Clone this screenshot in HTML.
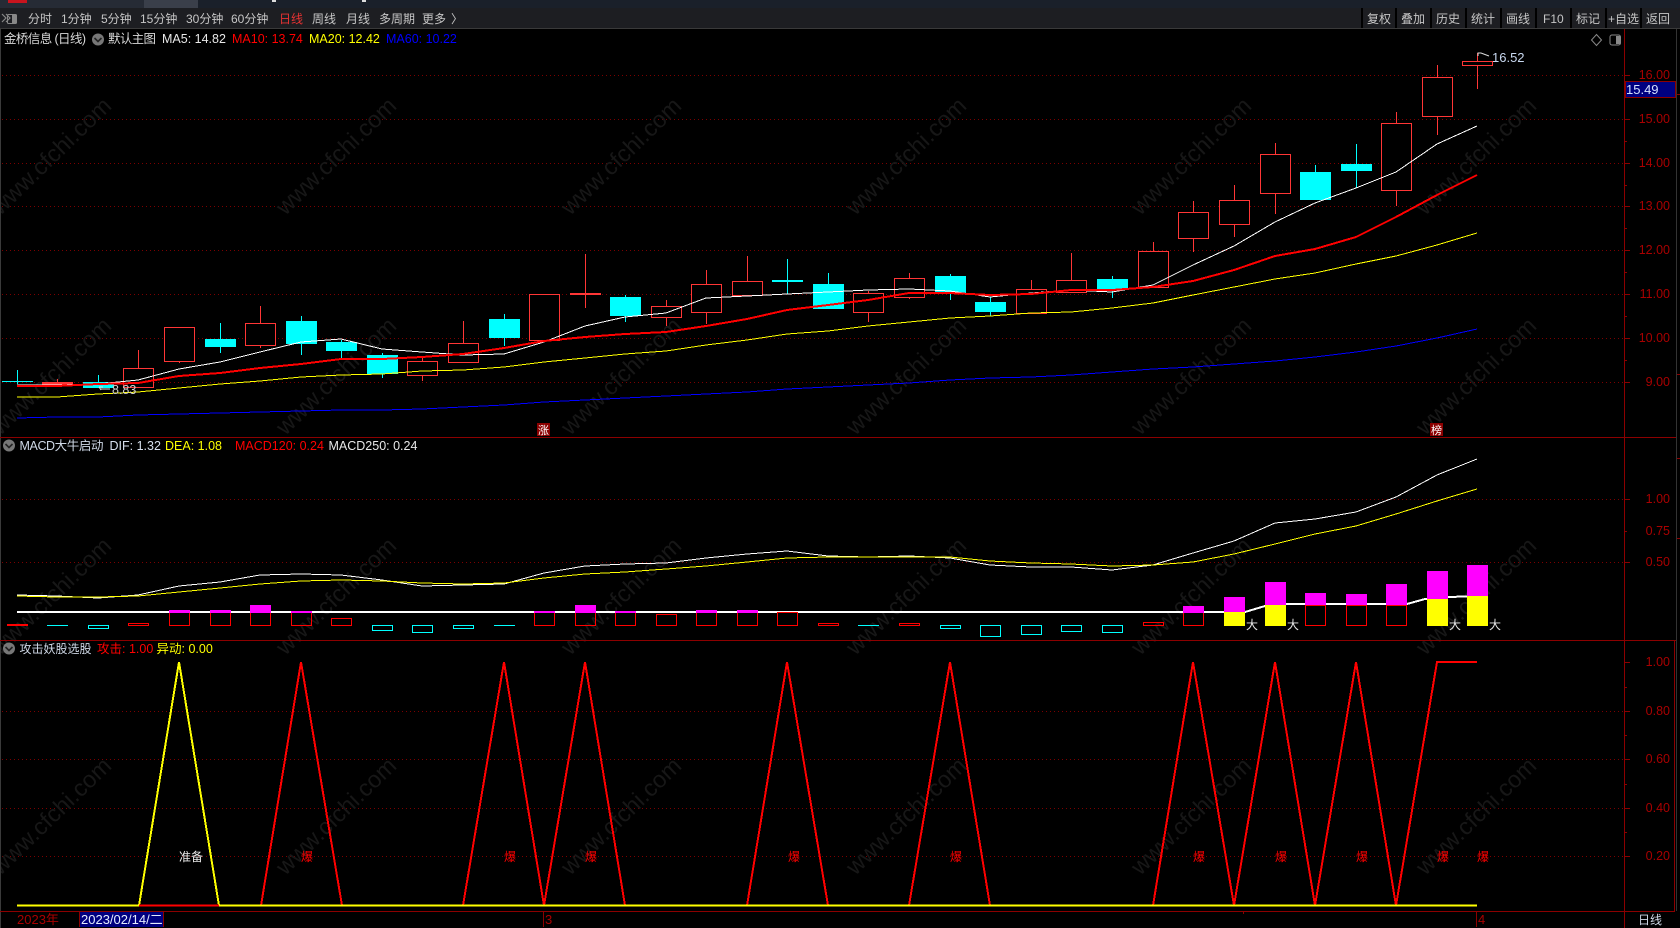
<!DOCTYPE html>
<html lang="zh"><head><meta charset="utf-8"><title>金桥信息</title>
<style>
html,body{margin:0;padding:0;background:#000;width:1680px;height:928px;overflow:hidden}
svg{position:absolute;left:0;top:0;display:block}
text{font-family:"Liberation Sans","Noto Sans CJK SC",sans-serif;font-size:12.5px;white-space:pre}
.w text{font-size:23.5px;fill:#171717;letter-spacing:.1px}
.t text{font-size:12px;fill:#c6c6c6}
.a text{fill:#a80000;text-anchor:end;font-size:12.5px}
.h{fill:#000;stroke:#ff3636;stroke-width:1}
.c{fill:#0ff}
.m{fill:#f0f}
.y{fill:#ff0}
.r{fill:none;stroke:#f00;stroke-width:1}
.q{fill:none;stroke:#0ff;stroke-width:1}
</style></head><body>
<svg width="1680" height="928" viewBox="0 0 1680 928" xmlns="http://www.w3.org/2000/svg">
<rect width="1680" height="928" fill="#000"/>
<!-- top strip -->
<rect width="1680" height="8" fill="#1a202a"/>
<rect x="0" y="0" width="144" height="8" fill="#262b35"/>
<rect x="144" y="0" width="54" height="8" fill="#3a3f4a"/>
<rect x="8" y="0" width="19" height="3" fill="#c8141e"/>
<rect x="272" y="0" width="4" height="2" fill="#ddd"/><rect x="362" y="0" width="4" height="2" fill="#ddd"/>
<!-- toolbar -->
<rect y="8" width="1680" height="20" fill="#1d1e22"/>
<rect y="28" width="1680" height="1" fill="#3a3a3a"/>
<path d="M2 14l4 4-4 4M6 14l4 4-4 4" fill="none" stroke="#888" stroke-width="1.2"/>
<rect x="7.5" y="14.5" width="9" height="9" rx="1" fill="none" stroke="#888"/><rect x="12" y="15" width="4" height="8" fill="#888"/>
<g fill="#000"><rect x="1361" y="8" width="2" height="20"/><rect x="1395" y="8" width="2" height="20"/><rect x="1430" y="8" width="2" height="20"/><rect x="1465" y="8" width="2" height="20"/><rect x="1500" y="8" width="2" height="20"/><rect x="1535" y="8" width="2" height="20"/><rect x="1570" y="8" width="2" height="20"/><rect x="1605" y="8" width="2" height="20"/><rect x="1640" y="8" width="2" height="20"/></g>
<g class="t">
<text x="28" y="23">分时</text><text x="61" y="23">1分钟</text><text x="101" y="23">5分钟</text><text x="140" y="23">15分钟</text><text x="186" y="23">30分钟</text><text x="231" y="23">60分钟</text>
<text x="279" y="23" style="fill:#e63232">日线</text><text x="312" y="23">周线</text><text x="346" y="23">月线</text><text x="379" y="23">多周期</text><text x="422" y="23">更多</text><text x="451" y="23">〉</text>
<text x="1367" y="23">复权</text><text x="1401" y="23">叠加</text><text x="1436" y="23">历史</text><text x="1471" y="23">统计</text><text x="1506" y="23">画线</text><text x="1543" y="23">F10</text><text x="1576" y="23">标记</text><text x="1608" y="23">+自选</text><text x="1646" y="23">返回</text>
</g>
<!-- grid -->
<path d="M2 75.5H1624M2 119.5H1624M2 163.5H1624M2 206.5H1624M2 250.5H1624M2 294.5H1624M2 338.5H1624M2 382.5H1624M2 499.5H1624M2 562.5H1624M2 711.5H1624M2 759.5H1624M2 808.5H1624M2 856.5H1624" stroke="#7c0000" stroke-width="1" stroke-dasharray="1 3" fill="none" shape-rendering="crispEdges"/>
<!-- watermark -->
<g class="w">
<text transform="translate(51 156) rotate(-44)" text-anchor="middle" y="8">www.cfchi.com</text><text transform="translate(336 156) rotate(-44)" text-anchor="middle" y="8">www.cfchi.com</text><text transform="translate(621 156) rotate(-44)" text-anchor="middle" y="8">www.cfchi.com</text><text transform="translate(906 156) rotate(-44)" text-anchor="middle" y="8">www.cfchi.com</text><text transform="translate(1191 156) rotate(-44)" text-anchor="middle" y="8">www.cfchi.com</text><text transform="translate(1476 156) rotate(-44)" text-anchor="middle" y="8">www.cfchi.com</text>
<text transform="translate(51 376) rotate(-44)" text-anchor="middle" y="8">www.cfchi.com</text><text transform="translate(336 376) rotate(-44)" text-anchor="middle" y="8">www.cfchi.com</text><text transform="translate(621 376) rotate(-44)" text-anchor="middle" y="8">www.cfchi.com</text><text transform="translate(906 376) rotate(-44)" text-anchor="middle" y="8">www.cfchi.com</text><text transform="translate(1191 376) rotate(-44)" text-anchor="middle" y="8">www.cfchi.com</text><text transform="translate(1476 376) rotate(-44)" text-anchor="middle" y="8">www.cfchi.com</text>
<text transform="translate(51 596) rotate(-44)" text-anchor="middle" y="8">www.cfchi.com</text><text transform="translate(336 596) rotate(-44)" text-anchor="middle" y="8">www.cfchi.com</text><text transform="translate(621 596) rotate(-44)" text-anchor="middle" y="8">www.cfchi.com</text><text transform="translate(906 596) rotate(-44)" text-anchor="middle" y="8">www.cfchi.com</text><text transform="translate(1191 596) rotate(-44)" text-anchor="middle" y="8">www.cfchi.com</text><text transform="translate(1476 596) rotate(-44)" text-anchor="middle" y="8">www.cfchi.com</text>
<text transform="translate(51 816) rotate(-44)" text-anchor="middle" y="8">www.cfchi.com</text><text transform="translate(336 816) rotate(-44)" text-anchor="middle" y="8">www.cfchi.com</text><text transform="translate(621 816) rotate(-44)" text-anchor="middle" y="8">www.cfchi.com</text><text transform="translate(906 816) rotate(-44)" text-anchor="middle" y="8">www.cfchi.com</text><text transform="translate(1191 816) rotate(-44)" text-anchor="middle" y="8">www.cfchi.com</text><text transform="translate(1476 816) rotate(-44)" text-anchor="middle" y="8">www.cfchi.com</text>
</g>
<g shape-rendering="crispEdges">
<!-- red wicks -->
<path fill="none" stroke="#ff3636" d="M57.5 379V382M138.5 350V368M179.5 361V363M260.5 306V323M260.5 345V348M422.5 358V361M422.5 375V381M463.5 321V343M666.5 300V306M666.5 317V326M706.5 270V284M706.5 312V324M747.5 256V281M747.5 295V296M868.5 291V293M868.5 312V322M909.5 273V278M909.5 297V299M1031.5 280V289M1071.5 253V280M1071.5 292V293M1153.5 242V251M1193.5 201V212M1193.5 238V252M1234.5 185V200M1234.5 224V237M1275.5 143V154M1275.5 193V214M1396.5 112V123M1396.5 190V206M1437.5 65V77M1437.5 116V135M1477.5 53V61M1477.5 65V89M585.5 254V308"/>
<!-- cyan wicks -->
<path fill="none" stroke="#0ff" d="M17.5 370V384M98.5 375V388M220.5 323V353M301.5 316V355M341.5 340V360M382.5 353V378M504.5 314V346M625.5 295V322M787.5 259V294M828.5 273V284M950.5 274V300M990.5 297V316M1112.5 276V298M1315.5 165V172M1356.5 144V188"/>
<!-- hollow candles -->
<rect class="h" x="123.5" y="368.5" width="30" height="19"/>
<rect class="h" x="164.5" y="327.5" width="30" height="34"/>
<rect class="h" x="245.5" y="323.5" width="30" height="22"/>
<rect class="h" x="407.5" y="361.5" width="30" height="14"/>
<rect class="h" x="448.5" y="343.5" width="30" height="19"/>
<rect class="h" x="529.5" y="294.5" width="30" height="46"/>
<rect class="h" x="651.5" y="306.5" width="30" height="11"/>
<rect class="h" x="691.5" y="284.5" width="30" height="28"/>
<rect class="h" x="732.5" y="281.5" width="30" height="14"/>
<rect class="h" x="853.5" y="293.5" width="30" height="19"/>
<rect class="h" x="894.5" y="278.5" width="30" height="19"/>
<rect class="h" x="1016.5" y="289.5" width="30" height="24"/>
<rect class="h" x="1056.5" y="280.5" width="30" height="12"/>
<rect class="h" x="1138.5" y="251.5" width="30" height="36"/>
<rect class="h" x="1178.5" y="212.5" width="30" height="26"/>
<rect class="h" x="1219.5" y="200.5" width="30" height="24"/>
<rect class="h" x="1260.5" y="154.5" width="30" height="39"/>
<rect class="h" x="1381.5" y="123.5" width="30" height="67"/>
<rect class="h" x="1422.5" y="77.5" width="30" height="39"/>
<rect class="h" x="1462.5" y="61.5" width="30" height="4"/>
<!-- filled red -->
<rect x="42" y="382" width="31" height="3" fill="#ff3636"/><rect x="570" y="293" width="31" height="2" fill="#ff3636"/>
<!-- filled cyan -->
<rect class="c" x="2" y="381" width="31" height="1"/><rect class="c" x="83" y="382" width="31" height="6"/><rect class="c" x="205" y="339" width="31" height="8"/><rect class="c" x="286" y="321" width="31" height="23"/><rect class="c" x="326" y="342" width="31" height="9"/><rect class="c" x="367" y="355" width="31" height="19"/><rect class="c" x="489" y="319" width="31" height="19"/><rect class="c" x="610" y="297" width="31" height="19"/><rect class="c" x="772" y="280" width="31" height="2"/><rect class="c" x="813" y="284" width="31" height="25"/><rect class="c" x="935" y="276" width="31" height="17"/><rect class="c" x="975" y="302" width="31" height="10"/><rect class="c" x="1097" y="279" width="31" height="10"/><rect class="c" x="1300" y="172" width="31" height="28"/><rect class="c" x="1341" y="164" width="31" height="7"/>
<!-- MAs -->
<polyline fill="none" stroke="#fff" stroke-width="1" points="17,385 57,385 98,384 138,380 179,369 220,362 260,352 301,342 341,339 382,349 422,352 463,355 504,354 544,342 585,326 625,317 666,313 706,298 747,296 787,294 828,292 868,290 909,289 950,291 990,297 1031,293 1071,290 1112,292 1153,285 1193,265 1234,246 1275,222 1315,203 1356,188 1396,172 1437,144 1477,126"/>
<polyline fill="none" stroke="#ff0" stroke-width="1" points="17,397 57,397 98,394 138,392 179,388 220,384 260,381 301,377 341,375 382,374 422,371 463,370 504,367 544,362 585,358 625,354 666,351 706,345 747,340 787,334 828,331 868,326 909,322 950,318 990,316 1031,313 1071,312 1112,308 1153,303 1193,295 1234,287 1275,279 1315,273 1356,264 1396,256 1437,245 1477,233"/>
<polyline fill="none" stroke="#00f" stroke-width="1" points="17,418 57,417 98,417 138,415 179,414 220,413 260,412 301,411 341,410 382,410 422,409 463,407 504,405 544,402 585,400 625,398 666,396 706,394 747,392 787,389 828,387 868,385 909,383 950,380 990,378 1031,377 1071,375 1112,372 1153,369 1193,367 1234,364 1275,361 1315,357 1356,352 1396,346 1437,338 1477,329"/>
<polyline fill="none" stroke="#f00" stroke-width="2" points="17,386 57,386 98,384 138,383 179,376 220,373 260,368 301,364 341,359 382,359 422,357 463,354 504,348 544,341 585,337 625,334 666,332 706,326 747,319 787,310 828,305 868,300 909,293 950,293 990,295 1031,294 1071,290 1112,290 1153,287 1193,281 1234,270 1275,256 1315,249 1356,237 1396,217 1437,195 1477,175"/>
<!-- MACD lines -->
<polyline fill="none" stroke="#fff" stroke-width="1" points="17,595 57,596 98,598 138,595 179,586 220,582 260,575 301,574 341,575 382,580 422,586 463,585 504,584 544,573 585,566 625,564 666,563 706,558 747,554 787,551 828,556 868,557 909,556 950,558 990,565 1031,567 1071,567 1112,570 1153,565 1193,553 1234,541 1275,523 1315,519 1356,512 1396,497 1437,475 1477,459"/>
<polyline fill="none" stroke="#ff0" stroke-width="1" points="17,596 57,597 98,597 138,596 179,592 220,588 260,584 301,581 341,580 382,581 422,583 463,584 504,583 544,578 585,574 625,572 666,569 706,566 747,562 787,558 828,557 868,557 909,557 950,557 990,561 1031,563 1071,564 1112,566 1153,565 1193,562 1234,554 1275,544 1315,534 1356,526 1396,514 1437,501 1477,489"/>
<path fill="none" stroke="#fff" stroke-width="2" d="M17 612H1245L1265 606L1286 604H1407L1425 599L1450 597L1477 596"/>
<!-- MACD bars -->
<rect x="7" y="624" width="21" height="2" fill="#f00"/>
<path class="q" d="M47 625.5H68M494 625.5H515M858 625.5H879"/>
<rect class="q" x="88.5" y="625.5" width="20" height="3"/>
<rect class="r" x="128.5" y="623.5" width="20" height="2"/>
<rect class="r" x="169.5" y="612.5" width="20" height="13"/><rect class="m" x="169" y="610" width="21" height="3"/>
<rect class="r" x="210.5" y="612.5" width="20" height="13"/><rect class="m" x="210" y="610" width="21" height="3"/>
<rect class="r" x="250.5" y="612.5" width="20" height="13"/><rect class="m" x="250" y="605" width="21" height="8"/>
<rect class="r" x="291.5" y="612.5" width="20" height="13"/><rect class="m" x="291" y="611" width="21" height="2"/>
<rect class="r" x="331.5" y="618.5" width="20" height="7"/>
<rect class="q" x="372.5" y="625.5" width="20" height="5"/>
<rect class="q" x="412.5" y="625.5" width="20" height="7"/>
<rect class="q" x="453.5" y="625.5" width="20" height="3"/>
<rect class="r" x="534.5" y="612.5" width="20" height="13"/><rect class="m" x="534" y="611" width="21" height="2"/>
<rect class="r" x="575.5" y="612.5" width="20" height="13"/><rect class="m" x="575" y="605" width="21" height="8"/>
<rect class="r" x="615.5" y="612.5" width="20" height="13"/><rect class="m" x="615" y="611" width="21" height="2"/>
<rect class="r" x="656.5" y="614.5" width="20" height="11"/>
<rect class="r" x="696.5" y="612.5" width="20" height="13"/><rect class="m" x="696" y="610" width="21" height="3"/>
<rect class="r" x="737.5" y="612.5" width="20" height="13"/><rect class="m" x="737" y="610" width="21" height="3"/>
<rect class="r" x="777.5" y="612.5" width="20" height="13"/>
<rect class="r" x="818.5" y="623.5" width="20" height="2"/>
<rect class="r" x="899.5" y="623.5" width="20" height="2"/>
<rect class="q" x="940.5" y="625.5" width="20" height="3"/>
<rect class="q" x="980.5" y="625.5" width="20" height="11"/>
<rect class="q" x="1021.5" y="625.5" width="20" height="9"/>
<rect class="q" x="1061.5" y="625.5" width="20" height="6"/>
<rect class="q" x="1102.5" y="625.5" width="20" height="7"/>
<rect class="r" x="1143.5" y="622.5" width="20" height="3"/>
<rect class="r" x="1183.5" y="612.5" width="20" height="13"/><rect class="m" x="1183" y="606" width="21" height="7"/>
<rect class="y" x="1224" y="612" width="21" height="14"/><rect class="m" x="1224" y="597" width="21" height="15"/>
<rect class="y" x="1265" y="605" width="21" height="21"/><rect class="m" x="1265" y="582" width="21" height="23"/>
<rect class="r" x="1305.5" y="605.5" width="20" height="20"/><rect class="m" x="1305" y="593" width="21" height="12"/>
<rect class="r" x="1346.5" y="605.5" width="20" height="20"/><rect class="m" x="1346" y="594" width="21" height="11"/>
<rect class="r" x="1386.5" y="605.5" width="20" height="20"/><rect class="m" x="1386" y="584" width="21" height="21"/>
<rect class="y" x="1427" y="599" width="21" height="27"/><rect class="m" x="1427" y="571" width="21" height="28"/>
<rect class="y" x="1467" y="596" width="21" height="30"/><rect class="m" x="1467" y="565" width="21" height="31"/>
<!-- attack panel -->
<polyline fill="none" stroke="#f00" stroke-width="2" points="17,905.5 261,905.5 301,662 342,905.5 463,905.5 504,662 544,905.5 585,662 625,905.5 747,905.5 787,662 828,905.5 909,905.5 950,662 990,905.5 1153,905.5 1193,662 1234,905.5 1275,662 1315,905.5 1356,662 1396,905.5 1437,662 1477,662"/>
<polyline fill="none" stroke="#ff0" stroke-width="2" points="139,905.5 179,662 219,905.5"/>
<path fill="none" stroke="#ff0" stroke-width="2" d="M17 905.5H139M219 905.5H1477"/>
<path fill="none" stroke="#f00" stroke-width="2" d="M139 905.5H219"/>
<!-- frame -->
<rect x="0" y="29" width="1" height="899" fill="#3a3a3a"/>
<rect x="1676" y="29" width="1" height="882" fill="#333"/>
<rect x="1624" y="29" width="1" height="899" fill="#8c0000"/>
<rect x="1674" y="640" width="1" height="271" fill="#8c0000"/>
<rect x="0" y="437" width="1676" height="1" fill="#8c0000"/>
<rect x="0" y="640" width="1676" height="1" fill="#8c0000"/>
<rect x="0" y="911" width="1675" height="1" fill="#8c0000"/>
<path stroke="#8c0000" fill="none" d="M1624 75.5h6M1624 119.5h6M1624 163.5h6M1624 206.5h6M1624 250.5h6M1624 294.5h6M1624 338.5h6M1624 382.5h6M1624 499.5h6M1624 562.5h6M1624 662.5h6M1624 711.5h6M1624 759.5h6M1624 808.5h6M1624 856.5h6M1624 97.5h3M1624 141.5h3M1624 185.5h3M1624 228.5h3M1624 272.5h3M1624 316.5h3M1624 360.5h3M1624 531.5h3M1624 687.5h3M1624 735.5h3M1624 784.5h3M1624 832.5h3M1677 94.5h3M1677 374.5h3M1677 458.5h3M1677 538.5h3M1243.5 911v3"/>
<path stroke="#8c0000" fill="none" d="M79.5 912v15M163.5 912v15M543.5 912v15M1476.5 912v15M1624.5 912v15"/>
<rect x="80" y="912" width="83" height="15" fill="#000080"/>
<!-- price box -->
<rect x="1625.5" y="81.5" width="50" height="16" fill="#000080" stroke="#8c0000"/>
</g>
<!-- axis labels -->
<g class="a">
<text x="1670" y="79">16.00</text><text x="1670" y="123">15.00</text><text x="1670" y="167">14.00</text><text x="1670" y="210">13.00</text><text x="1670" y="254">12.00</text><text x="1670" y="298">11.00</text><text x="1670" y="342">10.00</text><text x="1670" y="386">9.00</text>
<text x="1670" y="503">1.00</text><text x="1670" y="535">0.75</text><text x="1670" y="566">0.50</text>
<text x="1670" y="666">1.00</text><text x="1670" y="715">0.80</text><text x="1670" y="763">0.60</text><text x="1670" y="812">0.40</text><text x="1670" y="860">0.20</text>
</g>
<text x="1626" y="94" fill="#d4e0ff" style="font-size:13px">15.49</text>
<!-- titles -->
<text x="4" y="43" fill="#d8d8d8" textLength="82" lengthAdjust="spacing">金桥信息 (日线)</text>
<circle cx="98" cy="39.5" r="6" fill="#777"/><path d="M94.5 38l3.5 3.5 3.5-3.5" fill="none" stroke="#222" stroke-width="1.6"/>
<text x="108" y="43" fill="#d8d8d8" textLength="48" lengthAdjust="spacing">默认主图</text>
<text x="162" y="43" fill="#e8e8e8">MA5: 14.82</text><text x="232" y="43" fill="#f00">MA10: 13.74</text><text x="309" y="43" fill="#ff0">MA20: 12.42</text><text x="386" y="43" fill="#00f">MA60: 10.22</text>
<path d="M1596.5 34.5l5 5.5-5 5.5-5-5.5z" fill="none" stroke="#888"/>
<rect x="1610" y="35" width="10.5" height="10" rx="2" fill="none" stroke="#888"/><rect x="1616" y="36" width="4" height="8" fill="#888"/>
<circle cx="9" cy="445.5" r="6" fill="#777"/><path d="M5.5 444l3.5 3.5 3.5-3.5" fill="none" stroke="#222" stroke-width="1.6"/>
<text x="19.5" y="450" fill="#cfd8e6" textLength="84" lengthAdjust="spacing">MACD大牛启动</text><text x="109.5" y="450" fill="#d8e0ee">DIF: 1.32</text><text x="165" y="450" fill="#ff0">DEA: 1.08</text><text x="235" y="450" fill="#f00">MACD120: 0.24</text><text x="328.5" y="450" fill="#e8e8e8">MACD250: 0.24</text>
<circle cx="9" cy="648.5" r="6" fill="#777"/><path d="M5.5 647l3.5 3.5 3.5-3.5" fill="none" stroke="#222" stroke-width="1.6"/>
<text x="19.5" y="653" fill="#cfd8e6" style="font-size:12px">攻击妖股选股</text><text x="97" y="653" fill="#f00">攻击: 1.00</text><text x="156.5" y="653" fill="#ff0">异动: 0.00</text>
<!-- annotations -->
<path d="M99 387l2 3M99 387l4 0M100 389h10M1478 56v-3h3l8 3" fill="none" stroke="#ddd" stroke-width="1"/>
<text x="112" y="394" fill="#cfcfcf">8.83</text>
<text x="1492" y="62" fill="#c8d8f0" style="font-size:13px">16.52</text>
<rect x="537" y="423" width="13" height="13" fill="#8c0000"/><text x="543.5" y="434" text-anchor="middle" fill="#fff" style="font-size:11px">涨</text>
<rect x="1430" y="423" width="13" height="13" fill="#8c0000"/><text x="1436.5" y="434" text-anchor="middle" fill="#fff" style="font-size:11px">榜</text>
<g fill="#e8e8e8" text-anchor="middle">
<text x="1252" y="629" style="font-size:12px">大</text><text x="1293" y="629" style="font-size:12px">大</text><text x="1455" y="629" style="font-size:12px">大</text><text x="1495" y="629" style="font-size:12px">大</text>
<text x="191" y="861" style="font-size:12px">准备</text>
</g>
<g fill="#f00" text-anchor="middle">
<text x="307" y="861" style="font-size:12px">爆</text><text x="510" y="861" style="font-size:12px">爆</text><text x="591" y="861" style="font-size:12px">爆</text><text x="794" y="861" style="font-size:12px">爆</text><text x="956" y="861" style="font-size:12px">爆</text><text x="1199" y="861" style="font-size:12px">爆</text><text x="1281" y="861" style="font-size:12px">爆</text><text x="1362" y="861" style="font-size:12px">爆</text><text x="1443" y="861" style="font-size:12px">爆</text><text x="1483" y="861" style="font-size:12px">爆</text>
</g>
<!-- time axis -->
<text x="17" y="924" fill="#a80000" style="font-size:13px">2023年</text>
<text x="81" y="924" fill="#e4ecff" style="font-size:13px">2023/02/14/二</text>
<text x="545" y="924" fill="#a80000" style="font-size:13px">3</text>
<text x="1478" y="924" fill="#a80000" style="font-size:13px">4</text>
<text x="1638" y="924" fill="#cfd8e6" style="font-size:12px">日线</text>
</svg>
</body></html>
